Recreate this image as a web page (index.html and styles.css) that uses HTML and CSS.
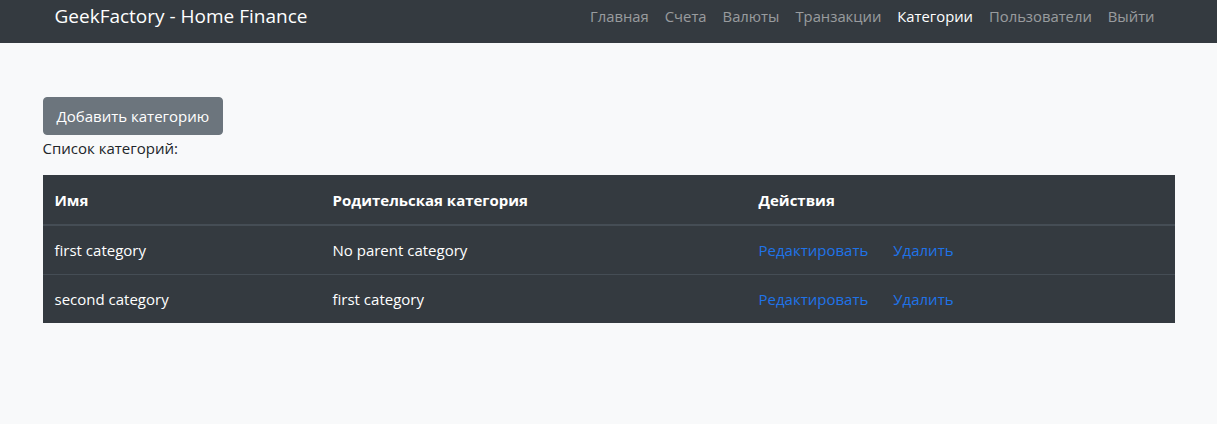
FILE: index.html
```html
<!DOCTYPE html>
<html lang="ru">
<head>
<meta charset="utf-8">
<title>GeekFactory - Home Finance</title>
<link rel="stylesheet" href="styles.css">
</head>
<body>
<nav class="navbar">
  <div class="navbar-inner">
    <a class="brand" href="#">GeekFactory - Home Finance</a>
    <ul class="nav">
      <li><a class="nav-link" href="#">Главная</a></li>
      <li><a class="nav-link" href="#">Счета</a></li>
      <li><a class="nav-link" href="#">Валюты</a></li>
      <li><a class="nav-link" href="#">Транзакции</a></li>
      <li><a class="nav-link active" href="#">Категории</a></li>
      <li><a class="nav-link" href="#">Пользователи</a></li>
      <li><a class="nav-link" href="#">Выйти</a></li>
    </ul>
  </div>
</nav>
<main class="content">
  <button class="btn" type="button">Добавить категорию</button>
  <p class="caption">Список категорий:</p>
  <table class="table">
    <thead>
      <tr><th class="c1">Имя</th><th class="c2">Родительская категория</th><th class="c3">Действия</th></tr>
    </thead>
    <tbody>
      <tr><td>first category</td><td>No parent category</td><td><a class="act" href="#">Редактировать</a><a class="act" href="#">Удалить</a></td></tr>
      <tr><td>second category</td><td>first category</td><td><a class="act" href="#">Редактировать</a><a class="act" href="#">Удалить</a></td></tr>
    </tbody>
  </table>
</main>
</body>
</html>
```
FILE: styles.css
```css
html, body {
  margin: 0;
  padding: 0;
}
body {
  background: #f8f9fa;
  font-family: "Open Sans", "Noto Sans", sans-serif;
  font-size: 15px;
  line-height: 24px;
  color: #212529;
  height: 424px;
  overflow: hidden;
}
.navbar {
  background: #343a40;
  height: 43px;
  box-sizing: border-box;
}
.navbar-inner {
  max-width: 1110px;
  margin: 0 auto;
  display: flex;
  align-items: center;
  justify-content: space-between;
  height: 31px;
}
.brand {
  color: #fff;
  text-decoration: none;
  font-size: 19px;
  line-height: 30px;
  padding-left: 1px;
}
.nav {
  list-style: none;
  margin: 0;
  padding: 0 1px 0 0;
  display: flex;
}
.nav-link {
  display: block;
  padding: 0 8px;
  color: rgba(255, 255, 255, 0.5);
  text-decoration: none;
  font-size: 14.8px;
}
.nav-link.active {
  color: #fff;
}
.content {
  max-width: 1132px;
  margin: 0 auto;
  padding-top: 54px;
}
.btn {
  display: block;
  font-family: inherit;
  font-size: 15px;
  line-height: 24px;
  color: #fff;
  background: #6c757d;
  border: 1px solid #6c757d;
  border-radius: 4px;
  padding: 6px 13px;
  height: 38px;
  cursor: pointer;
}
.caption {
  margin: 1px 0 15px;
}
.table {
  width: 100%;
  border-collapse: collapse;
  background: #343a40;
  color: #fff;
}
.table th, .table td {
  padding: 12px;
  text-align: left;
  vertical-align: top;
  border-top: 1px solid #454d55;
}
.table th {
  font-weight: 700;
  border-top: 0;
  border-bottom: 2px solid #454d55;
  padding-top: 13px;
}
.c1 { width: 254px; }
.c2 { width: 402px; }
.act {
  color: #1f73e8;
  text-decoration: none;
  margin-right: 25px;
}
```
